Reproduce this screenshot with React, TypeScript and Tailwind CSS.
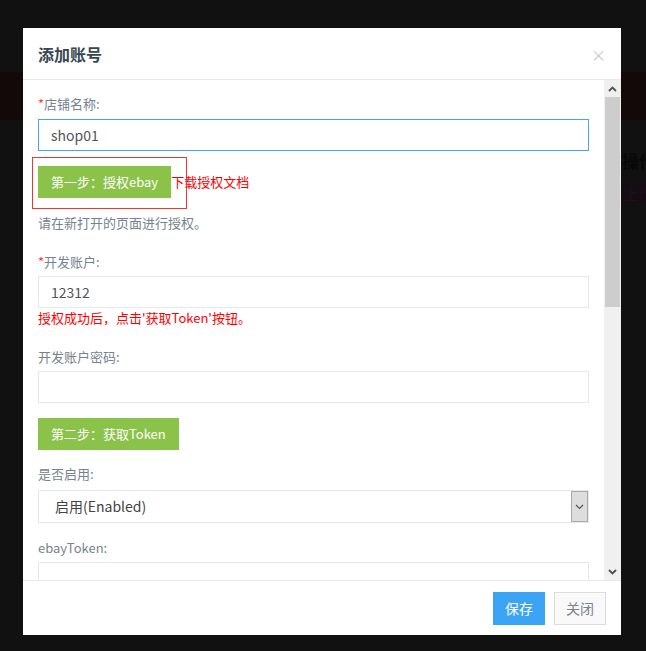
import React from 'react';

const font = "font-['Noto_Sans_CJK_SC','Noto_Sans',sans-serif]";

function Label({ text, required }: { text: string; required?: boolean }) {
    return (
        <div className="text-[13px] leading-[18px] text-[#76838f]">
            {required && <span className="text-[#f44336]">*</span>}
            {text}
        </div>
    );
}

function Chevron({ dir, className }: { dir: 'up' | 'down'; className?: string }) {
    return (
        <svg width="9" height="6" viewBox="0 0 9 6" className={className}>
            {dir === 'up' ? (
                <path d="M1 5 L4.5 1.5 L8 5" fill="none" stroke="#505050" strokeWidth="1.8" />
            ) : (
                <path d="M1 1 L4.5 4.5 L8 1" fill="none" stroke="#505050" strokeWidth="1.8" />
            )}
        </svg>
    );
}

export default function App() {
    return (
        <div className={`relative w-full h-[651px] bg-[#111111] overflow-hidden ${font}`}>
            {/* page behind the overlay */}
            <div className="h-[72px]" />
            <div className="h-[48px] bg-[#130908]" />
            <div className="pl-[622px] pt-[30px] whitespace-nowrap">
                <div className="text-[17px] font-bold text-[#080808] leading-[22px]">操作</div>
                <div className="mt-[12px] h-[20px] w-[40px] bg-[#150c14] text-[15px] leading-[20px] text-[#1c111c] pl-[2px]">上传</div>
            </div>

            {/* modal */}
            <div className="absolute left-[23px] top-[28px] w-[598px] h-[607px] bg-white flex flex-col">
                <div className="h-[52px] shrink-0 border-b border-[#e8e8e8] px-[15px] flex items-center justify-between">
                    <h4 className="text-[16px] font-bold text-[#37474f] leading-[20px] pt-[1px]">添加账号</h4>
                    <span className="text-[15px] leading-none text-[#c8c8c8] pt-[2px]">×</span>
                </div>

                <div className="h-[500px] shrink-0 flex">
                    <div className="flex-1 overflow-hidden px-[15px] pt-[15px]">
                        <Label text="店铺名称:" required />
                        <div className="mt-[6px] h-[32px] border border-[#4aa3f0] pl-[12px] flex items-center text-[14px] text-[#555555]">shop01</div>

                        <div className="relative mt-[15px] flex items-center">
                            <div className="absolute -left-[6px] -top-[9px] w-[155px] h-[52px] border border-[#e53935]" />
                            <button className="h-[32px] px-[13px] bg-[#8bc34a] text-white text-[13px]">第一步：授权ebay</button>
                            <a href="#" className="text-[13px] text-[#ff0000]">下载授权文档</a>
                        </div>

                        <div className="mt-[16px] text-[13px] leading-[18px] text-[#76838f]">请在新打开的页面进行授权。</div>

                        <div className="mt-[21px]">
                            <Label text="开发账户:" required />
                        </div>
                        <div className="mt-[5px] h-[32px] border border-[#e4eaec] pl-[12px] flex items-center text-[14px] text-[#555555]">12312</div>
                        <div className="mt-[1px] text-[13px] leading-[18px] text-[#ff0000]">授权成功后，点击'获取Token'按钮。</div>

                        <div className="mt-[21px]">
                            <Label text="开发账户密码:" />
                        </div>
                        <div className="mt-[5px] h-[32px] border border-[#e4eaec]" />

                        <button className="mt-[15px] h-[32px] px-[13px] bg-[#8bc34a] text-white text-[13px]">第二步：获取Token</button>

                        <div className="mt-[15px]">
                            <Label text="是否启用:" />
                        </div>
                        <div className="mt-[7px] h-[33px] border border-[#e4eaec] flex items-center justify-between pl-[16px]">
                            <span className="text-[14px] text-[#444444]">启用(Enabled)</span>
                            <div className="h-[31px] w-[17px] bg-[#dddddd] border border-[#a9a9a9] flex items-center justify-center">
                                <svg width="9" height="6" viewBox="0 0 9 6">
                                    <path d="M1 1 L4.5 4.5 L8 1" fill="none" stroke="#555555" strokeWidth="1.2" />
                                </svg>
                            </div>
                        </div>

                        <div className="mt-[16px]">
                            <Label text="ebayToken:" />
                        </div>
                        <div className="mt-[5px] h-[32px] border border-[#e4eaec]" />
                    </div>

                    {/* scrollbar */}
                    <div className="w-[17px] shrink-0 bg-[#f0f0f0] flex flex-col">
                        <div className="h-[17px] flex items-center justify-center">
                            <Chevron dir="up" />
                        </div>
                        <div className="h-[210px] mx-[1px] bg-[#cdcdcd]" />
                        <div className="flex-1" />
                        <div className="h-[17px] flex items-center justify-center">
                            <Chevron dir="down" />
                        </div>
                    </div>
                </div>

                <div className="flex-1 border-t border-[#e8e8e8] flex justify-end items-start gap-[9px] pt-[11px] pr-[15px]">
                    <button className="h-[33px] w-[52px] bg-[#3ca4f4] text-white text-[14px]">保存</button>
                    <button className="h-[33px] w-[52px] bg-[#f9f9f9] border border-[#d8dde0] text-[#76838f] text-[14px]">关闭</button>
                </div>
            </div>
        </div>
    );
}
